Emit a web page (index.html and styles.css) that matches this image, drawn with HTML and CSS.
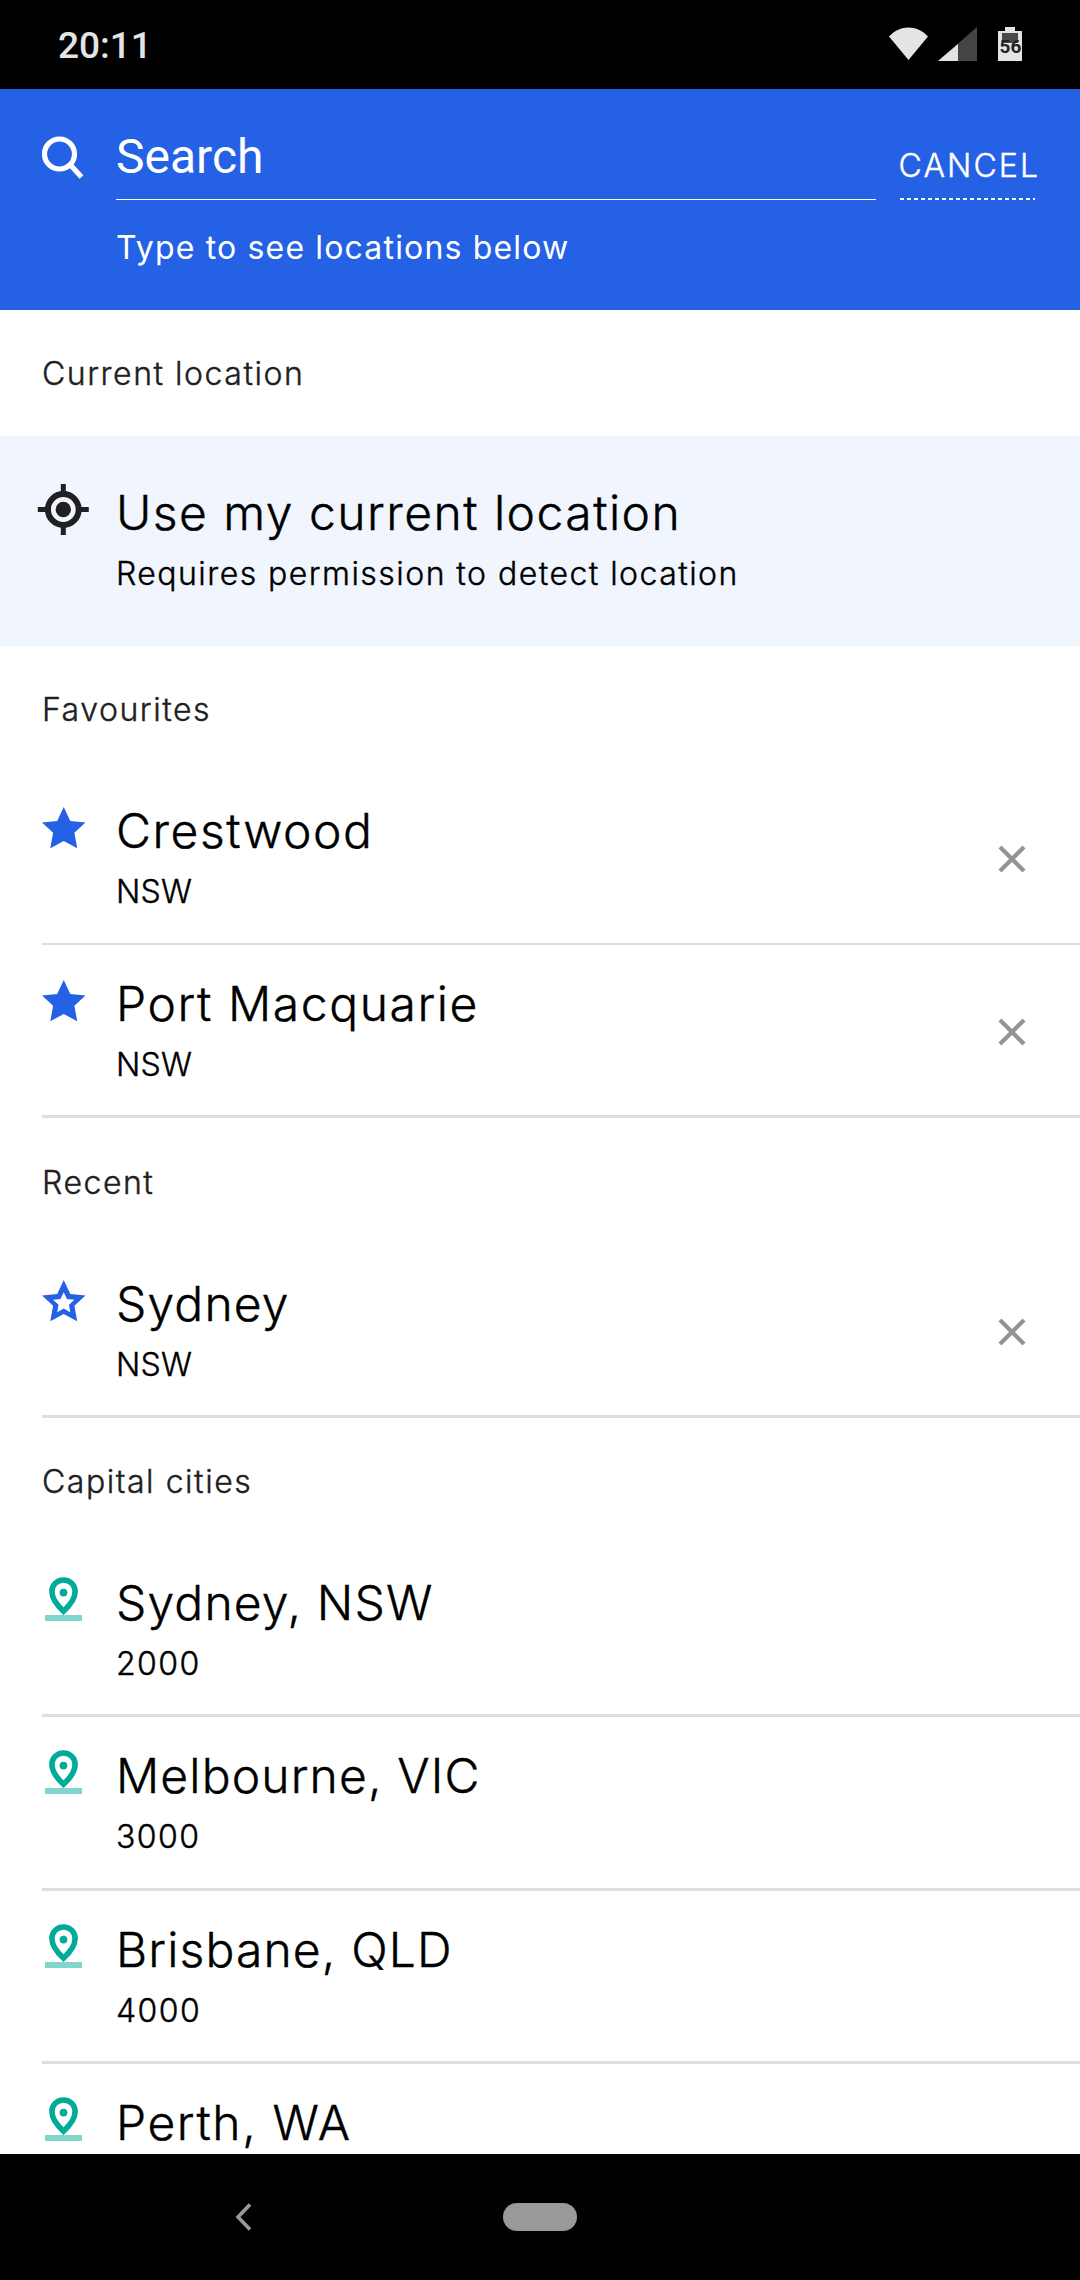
FILE: index.html
```html
<!DOCTYPE html>
<html lang="en">
<head>
<meta charset="utf-8">
<title>Search locations</title>
<link rel="stylesheet" href="styles.css">
</head>
<body>
<svg class="defs" width="0" height="0" aria-hidden="true">
  <symbol id="star" viewBox="0 0 20 19"><path d="M10 0l3 6.4 7 .75-5.1 4.75L16.2 19 10 15.6 3.8 19l1.3-7.1L0 7.15l7-.75z"/></symbol>
  <symbol id="close" viewBox="0 0 28 28"><path d="M2 2l24 24M26 2L2 26" fill="none" stroke="#949494" stroke-width="4.2"/></symbol>
  <symbol id="pin" viewBox="0 0 44 44">
    <path d="M21.500 3c-6.800 0-11.600 5.200-11.600 11.600C9.900 22 16 29.200 21.500 34.200 27 29.200 33.100 22 33.100 14.600 33.100 8.200 28.300 3 21.500 3z" fill="none" stroke="#00ab9a" stroke-width="5.600"/>
    <circle cx="21.500" cy="15.600" r="3.900" fill="#00ab9a"/>
    <path d="M3 38h37v6H3z" fill="#80d5cc"/>
  </symbol>
</svg>
<div class="screen">
  <header class="status">
    <span class="clock">20:11</span>
    <svg class="status-icons" width="136" height="36" viewBox="0 0 136 36">
      <path d="M0 9.500C11-2.500 28-2.500 39 9.500L19.500 33z" fill="#e4e4e4"/>
      <path d="M88 0v34H49z" fill="#444"/>
      <path d="M69 17v17H49z" fill="#e4e4e4"/>
      <path d="M116 0h10v4h7v30h-24V4h7z" fill="#e4e4e4"/>
      <path d="M113 6h16v10h-16z" fill="#4a4a4a"/>
      <text class="battery" x="121.500" y="25.500" text-anchor="middle">56</text>
    </svg>
  </header>

  <section class="search">
    <svg class="search-icon" width="42" height="43" viewBox="0 0 42 43"><circle cx="17.500" cy="18" r="15" fill="none" stroke="#fff" stroke-width="5.200"/><path d="M28 28.500L39.500 41" stroke="#fff" stroke-width="5.200"/></svg>
    <div class="field">
      <div class="input">Search</div>
      <div class="hint">Type to see locations below</div>
    </div>
    <div class="cancel">CANCEL</div>
  </section>

  <main class="list">
    <h2 class="heading">Current location</h2>
    <div class="row current">
      <svg class="icon" width="52" height="52" viewBox="0 0 52 52"><circle cx="26.300" cy="25.500" r="15.400" fill="none" stroke="#202020" stroke-width="6"/><circle cx="26.300" cy="25.500" r="7.700" fill="#202020"/><path d="M26.300 0v9M26.300 42v9M.8 25.500h9M42.800 25.500h9" stroke="#202020" stroke-width="5"/></svg>
      <div class="text"><div class="name">Use my current location</div><div class="sub">Requires permission to detect location</div></div>
    </div>

    <h2 class="heading">Favourites</h2>
    <div class="row thin">
      <svg class="icon star" width="43.500" height="41.300"><use href="#star"/></svg>
      <div class="text"><div class="name wide">Crestwood</div><div class="sub state">NSW</div></div>
      <svg class="close" width="28" height="28"><use href="#close"/></svg>
    </div>
    <div class="row">
      <svg class="icon star" width="43.500" height="41.300"><use href="#star"/></svg>
      <div class="text"><div class="name wide">Port Macquarie</div><div class="sub state">NSW</div></div>
      <svg class="close" width="28" height="28"><use href="#close"/></svg>
    </div>

    <h2 class="heading recent">Recent</h2>
    <div class="row">
      <svg class="icon star" width="43.500" height="41.300" viewBox="0 0 20 19"><path fill-rule="evenodd" d="M10 0l3 6.400 7 .75-5.100 4.750L16.200 19 10 15.600 3.800 19l1.300-7.100L0 7.150l7-.75zM10 5.600L8.500 8.700l-3.400.4 2.500 2.300-.6 3.400 3-1.700 3 1.700-.6-3.400 2.500-2.300-3.400-.4z"/></svg>
      <div class="text"><div class="name snug">Sydney</div><div class="sub state">NSW</div></div>
      <svg class="close" width="28" height="28"><use href="#close"/></svg>
    </div>

    <h2 class="heading">Capital cities</h2>
    <div class="row">
      <svg class="icon pin" width="44" height="44"><use href="#pin"/></svg>
      <div class="text"><div class="name snug">Sydney, NSW</div><div class="sub">2000</div></div>
    </div>
    <div class="row tall">
      <svg class="icon pin" width="44" height="44"><use href="#pin"/></svg>
      <div class="text"><div class="name snug">Melbourne, VIC</div><div class="sub">3000</div></div>
    </div>
    <div class="row">
      <svg class="icon pin" width="44" height="44"><use href="#pin"/></svg>
      <div class="text"><div class="name snug">Brisbane, QLD</div><div class="sub">4000</div></div>
    </div>
    <div class="row">
      <svg class="icon pin" width="44" height="44"><use href="#pin"/></svg>
      <div class="text"><div class="name wide">Perth, WA</div></div>
    </div>
  </main>

  <nav class="nav">
    <svg width="17" height="28" viewBox="0 0 17 28"><path d="M15 1.500L3 14l12 12.500" fill="none" stroke="#999" stroke-width="3.600"/></svg>
    <span class="pill"></span>
  </nav>
</div>
</body>
</html>
```
FILE: styles.css
```css
* { box-sizing: border-box; }
body { margin: 0; background: #fff; }
svg { display: block; flex: none; }
.defs { position: absolute; }

.screen {
  width: 1080px;
  height: 2280px;
  overflow: hidden;
  display: flex;
  flex-direction: column;
  font-family: Inter, "Liberation Sans", sans-serif;
  font-weight: 300;
}

.status {
  flex: none;
  height: 89px;
  background: #000;
  display: flex;
  justify-content: space-between;
  padding: 27px 55px 0 58px;
}
.clock {
  font: 500 37px/44px Roboto, sans-serif;
  color: #e4e4e4;
  margin-top: -3px;
}
.battery { font: 700 19px Roboto, sans-serif; fill: #222; }

.search {
  flex: none;
  height: 221px;
  background: #2561e5;
  color: #fff;
  display: flex;
  padding-left: 42px;
}
.search-icon { margin-top: 47px; }
.field { width: 760px; margin-left: 32px; }
.input {
  height: 111px;
  border-bottom: 1px solid #fff;
  padding-top: 40px;
  font: 400 48px/56px Roboto, sans-serif;
}
.hint {
  font-size: 32px;
  line-height: 40px;
  font-weight: 400;
  letter-spacing: 1.16px;
  margin-top: 28px;
}
.cancel {
  width: 135px;
  height: 112px;
  margin-left: 24px;
  padding-top: 57px;
  font-size: 32px;
  line-height: 40px;
  letter-spacing: 2.1px;
  text-indent: -1.5px;
  -webkit-text-stroke: .4px;
  background: repeating-linear-gradient(90deg, #fff 0 4px, transparent 4px 7px) 0 109px / 135px 2px no-repeat;
}

.list { flex: 1; min-height: 0; overflow: hidden; -webkit-text-stroke: .4px; }
.heading {
  margin: 0;
  height: 126px;
  padding: 44px 0 0 42px;
  font-size: 32px;
  line-height: 40px;
  font-weight: 300;
  letter-spacing: 1.53px;
  color: #202020;
}
.heading.recent { height: 127px; padding-top: 45px; }

.row {
  display: flex;
  height: 173px;
  margin-left: 42px;
  border-bottom: 3px solid #ddd;
  color: #000;
}
.row.thin { border-bottom-width: 2px; }
.row.tall { height: 174px; }
.row.current {
  height: 210px;
  margin-left: 0;
  padding: 18px 0 0 37px;
  border: 0;
  background: #f1f5fe;
}
.icon { margin-top: 30px; }
.star { margin: 35px .5px 0 0; fill: #2561e5; }
.pin { margin-top: 33px; }
.text { flex: 1; margin-left: 30px; padding-top: 29px; }
.current .text { margin-left: 27px; }
.name { font-size: 48px; line-height: 60px; letter-spacing: 1.47px; }
.name.wide { letter-spacing: 1.58px; }
.name.snug { letter-spacing: 1.14px; }
.sub { font-size: 32px; line-height: 40px; letter-spacing: 1.45px; margin-top: 11px; }
.sub.state { letter-spacing: .3px; }
.close { margin: 73px 54px 0 0; }

.nav {
  flex: none;
  height: 126px;
  background: #000;
  display: flex;
  align-items: center;
  padding-left: 235px;
}
.pill {
  width: 74px;
  height: 28px;
  margin-left: 251px;
  border-radius: 14px;
  background: #999;
}
```
